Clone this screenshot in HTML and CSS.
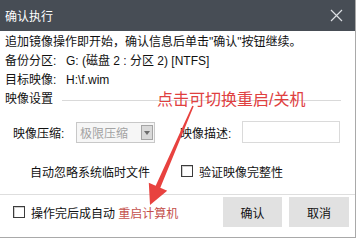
FILE: index.html
```html
<!DOCTYPE html>
<html>
<head>
  <meta charset="utf-8">
  <title>确认执行</title>
  <link rel="stylesheet" href="styles.css">
</head>
<body>
  <div class="dialog">
    <div class="titlebar">
      <span class="title">确认执行</span>
      <svg class="close" width="13" height="13" viewBox="0 0 13 13">
        <path d="M1 1 L12 12 M12 1 L1 12" stroke="#dcdfe3" stroke-width="1.2" fill="none"/>
      </svg>
    </div>

    <div class="content">
      <p class="line">追加镜像操作即开始，确认信息后单击"确认"按钮继续。</p>
      <div class="line info">
        <span class="label">备份分区:</span>
        <span class="value">G: (磁盘 2 : 分区 2) [NTFS]</span>
      </div>
      <div class="line info">
        <span class="label">目标映像:</span>
        <span class="value">H:\f.wim</span>
      </div>
      <div class="line group-title">
        <span>映像设置</span>
        <span class="rule"></span>
      </div>

      <div class="field-row">
        <span class="field-label">映像压缩:</span>
        <div class="select">
          <span>极限压缩</span>
          <span class="drop-btn"></span>
        </div>
        <span class="field-label desc-label">映像描述:</span>
        <div class="input"></div>
      </div>

      <div class="option-row">
        <span class="option-text">自动忽略系统临时文件</span>
        <span class="checkbox"></span>
        <span>验证映像完整性</span>
      </div>
    </div>

    <div class="footer">
      <div class="auto-restart">
        <span class="checkbox"></span>
        <span>操作完后成自动 <span class="red-link">重启计算机</span></span>
      </div>
      <div class="buttons">
        <button class="btn">确认</button>
        <button class="btn">取消</button>
      </div>
    </div>

    <div class="note">点击可切换重启/关机</div>
    <svg class="arrow" width="357" height="240" viewBox="0 0 357 240">
      <polygon points="192.3,105.7 193.7,106.3 160.3,187.7 167.2,190.7 150,205 148.8,182.7 155.7,185.7" fill="#e8423f"/>
    </svg>
  </div>
</body>
</html>
```

FILE: styles.css
```css
html, body {
  margin: 0;
  padding: 0;
  background: #fff;
}

body {
  font-family: "Liberation Sans", "Noto Sans CJK SC", sans-serif;
  font-size: 12px;
  color: #111;
}

.dialog {
  position: relative;
  width: 356px;
  height: 238px;
  border-right: 1px solid #a9a9a9;
  border-bottom: 1px solid #a9a9a9;
  box-sizing: border-box;
  background: #fff;
}

.titlebar {
  height: 31px;
  background-color: #474d55;
  color: #fff;
  display: flex;
  align-items: center;
  justify-content: space-between;
  padding: 0 12px 0 5px;
}

.title {
  font-size: 12px;
}

.content {
  padding: 2px 5px 0 5px;
}

.line {
  margin: 0;
  height: 19px;
  line-height: 19px;
  white-space: nowrap;
}

.info {
  display: flex;
}

.info .label {
  width: 61px;
}

.group-title {
  display: flex;
  align-items: center;
}

.group-title .rule {
  flex-grow: 1;
  height: 1px;
  margin: 1px 9px 0 9px;
  background-color: #d9d9d9;
}

.field-row {
  display: flex;
  align-items: center;
  height: 24px;
  margin-top: 11px;
  padding-left: 8px;
}

.field-label {
  width: 63px;
}

.desc-label {
  width: 62px;
  margin-left: 25px;
}

.select {
  width: 79px;
  height: 21px;
  box-sizing: border-box;
  border: 1px solid #c8c8c8;
  background-color: #f6f6f6;
  color: #a3a3a3;
  display: flex;
  align-items: center;
  justify-content: space-between;
  padding: 0 1px 0 3px;
}

.drop-btn {
  position: relative;
  width: 12px;
  height: 15px;
  box-sizing: border-box;
  border: 1px solid #a5a5a5;
  background-color: #d9d9d9;
}

.drop-btn::after {
  content: "";
  position: absolute;
  left: 2px;
  top: 5px;
  border-left: 3px solid transparent;
  border-right: 3px solid transparent;
  border-top: 4px solid #6d6d6d;
}

.input {
  width: 98px;
  height: 22px;
  box-sizing: border-box;
  border: 1px solid #dadada;
  background: #fff;
}

.option-row {
  display: flex;
  align-items: center;
  height: 18px;
  margin-top: 18px;
  padding-left: 25px;
}

.option-text {
  width: 151px;
}

.checkbox {
  display: inline-block;
  width: 12px;
  height: 12px;
  box-sizing: border-box;
  border: 1px solid #3c3c3c;
  background: #fff;
  box-shadow: inset 1px 1px 0 #cfcfcf;
  margin-right: 6px;
}

.footer {
  margin-top: 14px;
  border-top: 1px solid #dedede;
  display: flex;
  justify-content: space-between;
  padding: 2px 6px 0 13px;
}

.auto-restart {
  display: flex;
  align-items: center;
  height: 30px;
}

.red-link {
  color: #c4504c;
}

.buttons {
  display: flex;
  gap: 7px;
}

.btn {
  width: 59px;
  height: 30px;
  border: none;
  background-color: #e1e1e1;
  font-family: "Liberation Sans", "Noto Sans CJK SC", sans-serif;
  font-size: 12px;
  color: #111;
  padding: 0;
}

.btn + .btn {
  width: 60px;
}

/* annotation drawn over the dialog */
.note {
  position: absolute;
  left: 157px;
  top: 90px;
  font-size: 16px;
  line-height: 20px;
  color: #e0403f;
  white-space: nowrap;
}

.arrow {
  position: absolute;
  left: 0;
  top: 0;
  pointer-events: none;
}
```
